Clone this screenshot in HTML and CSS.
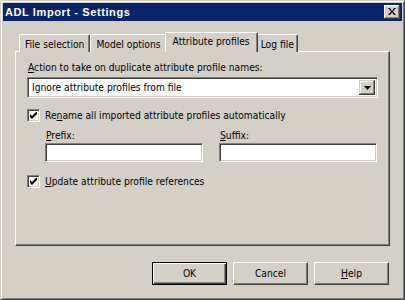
FILE: index.html
```html
<!DOCTYPE html>
<html>
<head>
<meta charset="utf-8">
<link rel="stylesheet" href="styles.css">
</head>
<body>
<div class="window">
  <div class="titlebar">
    <span class="title">ADL Import - Settings</span>
    <span class="close"><svg width="8" height="7" viewBox="0 0 8 7"><path d="M0 0h2l2 2.5L6 0h2L5 3.5 8 7H6L4 4.5 2 7H0l3-3.5z" fill="#000"/></svg></span>
  </div>
  <div class="body">
    <div class="tabs">
      <div class="tab">File selection</div>
      <div class="tab">Model options</div>
      <div class="tab active">Attribute profiles</div>
      <div class="tab last">Log file</div>
    </div>
    <div class="panel">
      <div class="label"><u>A</u>ction to take on duplicate attribute profile names:</div>
      <div class="combo">
        <span class="combo-text">Ignore attribute profiles from file</span>
        <span class="drop"><svg width="7" height="4" viewBox="0 0 7 4"><path d="M0 0h7L3.5 4z" fill="#000"/></svg></span>
      </div>
      <div class="check check-first">
        <span class="box"><svg width="7" height="7" viewBox="0 0 7 7"><path d="M0 2v3l2 2 5-5V-1L2 4z" fill="#000"/></svg></span>
        <span>Re<u>n</u>ame all imported attribute profiles automatically</span>
      </div>
      <div class="affix">
        <div class="field">
          <div class="label"><u>P</u>refix:</div>
          <div class="input"></div>
        </div>
        <div class="field">
          <div class="label"><u>S</u>uffix:</div>
          <div class="input"></div>
        </div>
      </div>
      <div class="check check-second">
        <span class="box"><svg width="7" height="7" viewBox="0 0 7 7"><path d="M0 2v3l2 2 5-5V-1L2 4z" fill="#000"/></svg></span>
        <span><u>U</u>pdate attribute profile references</span>
      </div>
    </div>
    <div class="buttons">
      <div class="btn default"><span class="btn-inner">OK</span></div>
      <div class="btn"><span class="btn-inner">Cancel</span></div>
      <div class="btn"><span class="btn-inner"><u>H</u>elp</span></div>
    </div>
  </div>
</div>
</body>
</html>
```
FILE: styles.css
```css
* { box-sizing: border-box; }
html, body { margin: 0; padding: 0; background: #d4d0c8; }
body {
  font-family: "DejaVu Sans Condensed", "DejaVu Sans", sans-serif;
  font-size: 10.2px;
  color: #000;
}
.window {
  width: 405px;
  height: 300px;
  background: #d4d0c8;
  border: 1px solid;
  border-color: #d4d0c8 #404040 #404040 #d4d0c8;
  box-shadow: inset 1px 1px #fff, inset -1px -1px #808080;
  padding: 2px;
  display: flex;
  flex-direction: column;
}
.titlebar {
  height: 18px;
  background: #0a246a;
  display: flex;
  align-items: center;
  justify-content: space-between;
  padding: 0 2px 0 2px;
}
.title {
  color: #fff;
  font-family: "Liberation Sans", Arial, sans-serif;
  font-weight: bold;
  font-size: 11px;
  letter-spacing: 0.6px;
}
.close {
  width: 16px;
  height: 14px;
  background: #d4d0c8;
  box-shadow: inset -1px -1px #404040, inset 1px 1px #fff, inset -2px -2px #808080;
  display: flex;
  align-items: center;
  justify-content: center;
  padding-bottom: 1px;
}
.body {
  padding: 12px 12px 0 12px;
  display: flex;
  flex-direction: column;
}
.tabs {
  display: flex;
  align-items: flex-end;
  height: 19px;
  padding-left: 4px;
  margin-bottom: -1px;
  position: relative;
  z-index: 1;
}
.tab {
  height: 18px;
  padding: 3px 5px 0 5px;
  line-height: 13px;
  border-top: 1px solid #fff;
  border-left: 1px solid #fff;
  border-right: 1px solid #404040;
  box-shadow: inset -1px 0 #808080;
  border-top-left-radius: 2px;
  border-top-right-radius: 2px;
  background: #d4d0c8;
  white-space: nowrap;
}
.tab.last { padding: 3px 3px 0 4px; }
.tab.active {
  height: 20px;
  padding: 2px 7px 0 7px;
  margin: 0 -2px;
  position: relative;
  z-index: 2;
}
.panel {
  height: 195px;
  border: 1px solid;
  border-color: #fff #404040 #404040 #fff;
  box-shadow: inset -1px -1px #808080;
  padding: 9px 11px 0 11px;
  display: flex;
  flex-direction: column;
}
.label {
  line-height: 13px;
  padding-left: 1px;
  white-space: nowrap;
}
.combo {
  margin-top: 3px;
  height: 21px;
  width: 351px;
  background: #fff;
  border: 1px solid;
  border-color: #808080 #fff #fff #808080;
  box-shadow: inset 1px 1px #404040, inset -1px -1px #d4d0c8;
  display: flex;
  align-items: center;
  justify-content: space-between;
  padding: 2px;
}
.combo-text {
  padding-left: 2px;
  line-height: 13px;
}
.drop {
  width: 16px;
  height: 15px;
  background: #d4d0c8;
  box-shadow: inset -1px -1px #404040, inset 1px 1px #d4d0c8, inset -2px -2px #808080, inset 2px 2px #fff;
  display: flex;
  align-items: center;
  justify-content: center;
}
.check {
  display: flex;
  align-items: center;
  gap: 5px;
  line-height: 13px;
}
.check-first { margin-top: 11px; }
.check-second { margin-top: 13px; }
.box {
  width: 13px;
  height: 13px;
  background: #fff;
  border: 1px solid;
  border-color: #808080 #fff #fff #808080;
  box-shadow: inset 1px 1px #404040, inset -1px -1px #d4d0c8;
  display: flex;
  align-items: center;
  justify-content: center;
}
.affix {
  display: flex;
  gap: 16px;
  padding-left: 18px;
  margin-top: 7px;
}
.field {
  display: flex;
  flex-direction: column;
  gap: 1px;
}
.input {
  width: 158px;
  height: 19px;
  background: #fff;
  border: 1px solid;
  border-color: #808080 #fff #fff #808080;
  box-shadow: inset 1px 1px #404040, inset -1px -1px #d4d0c8;
}
.buttons {
  display: flex;
  justify-content: flex-end;
  gap: 6px;
  margin-top: 16px;
  padding-right: 1px;
}
.btn {
  width: 75px;
  height: 23px;
  border: 1px solid;
  border-color: #fff #404040 #404040 #fff;
  box-shadow: inset -1px -1px #808080;
  display: flex;
  align-items: center;
  justify-content: center;
}
.btn.default {
  border: 1px solid #000;
  box-shadow: inset 1px 1px #fff, inset -1px -1px #404040, inset -2px -2px #808080;
}
.btn-inner { line-height: 13px; }
u { text-decoration: underline; text-underline-offset: 1px; }
```
